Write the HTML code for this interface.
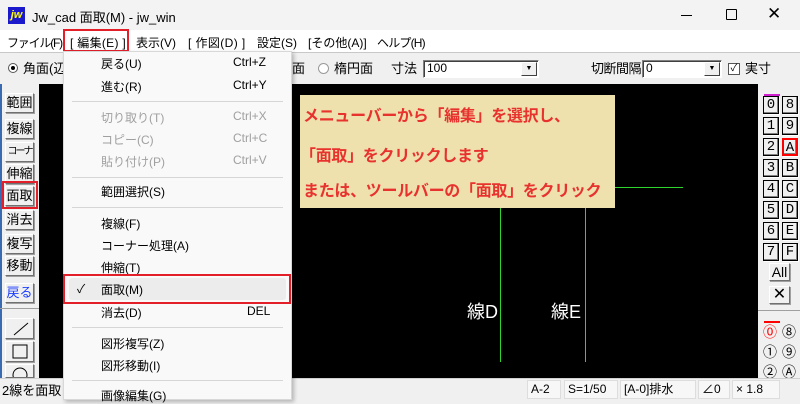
<!DOCTYPE html>
<html><head><meta charset="utf-8"><style>
*{margin:0;padding:0;box-sizing:border-box}
body{width:800px;height:400px;overflow:hidden;background:#f0f0f0;font-family:"Liberation Sans","Noto Sans CJK JP",sans-serif;font-size:12px;color:#000;position:relative}
.a{position:absolute;white-space:nowrap}
.sx{transform-origin:0 0;display:inline-block}
.btn{position:absolute;background:#f0f0f0;border:1px solid;border-color:#fff #707070 #707070 #fff;box-shadow:1px 1px 0 #a0a0a0;font-size:13px;text-align:center;line-height:18px;overflow:hidden}
.lb{position:absolute;width:20px;height:18px;background:#f0f0f0;border:1px solid #000;box-shadow:inset -1px -1px 0 #808080, 1px 1px 0 #fff;font-family:"Liberation Mono",monospace;font-size:14px;text-align:center;line-height:16px}
.mi{position:absolute;left:101px;font-size:12px}
.sc{position:absolute;left:233px;font-size:12px}
.sep{position:absolute;left:72px;width:211px;height:1px;background:#d6d6d6}
.dis{color:#a0a0a0}
.yt{position:absolute;left:303px;color:#e8322e;font-size:16px;font-weight:bold;white-space:nowrap;letter-spacing:-0.3px}
</style></head><body>
<!-- title bar -->
<div class="a" style="left:0;top:0;width:800px;height:30px;background:#f3f3f3"></div>
<div class="a" style="left:8px;top:7px;width:17px;height:17px;background:#1a1acc;color:#ff0;font-size:11px;font-weight:bold;font-style:italic;line-height:17px;text-align:center">jw</div>
<div class="a" style="left:32px;top:7px;font-size:13px">Jw_cad 面取(M) - jw_win</div>
<div class="a" style="left:681px;top:15px;width:11px;height:1px;background:#000"></div>
<div class="a" style="left:726px;top:9px;width:11px;height:11px;border:1px solid #000;border-radius:1px"></div>
<div class="a" style="left:767px;top:4px;font-size:17px;font-weight:300">✕</div>
<!-- menu bar -->
<div class="a" style="left:0;top:30px;width:800px;height:22px;background:#fff"></div>
<div class="a" style="left:7px;top:34px;letter-spacing:-1.2px">ファイル(F)</div>
<div class="a" style="left:70px;top:34px;letter-spacing:0.3px">[ 編集(E) ]</div>
<div class="a" style="left:63px;top:29px;width:66px;height:23px;border:2px solid #e3202a"></div>
<div class="a" style="left:136px;top:34px">表示(V)</div>
<div class="a" style="left:188px;top:34px;letter-spacing:0.4px">[ 作図(D) ]</div>
<div class="a" style="left:257px;top:34px">設定(S)</div>
<div class="a" style="left:308px;top:34px">[その他(A)]</div>
<div class="a" style="left:377px;top:34px;letter-spacing:-0.8px">ヘルプ(H)</div>
<!-- toolbar -->
<div class="a" style="left:0;top:52px;width:800px;height:32px;background:#f0f0f0;border-top:1px solid #c8c8c8"></div>
<div class="a" style="left:8px;top:63px;width:10px;height:10px;border-radius:50%;border:1px solid #555;background:#fff"><div style="margin:2px;width:4px;height:4px;border-radius:50%;background:#000"></div></div>
<div class="a" style="left:23px;top:58px;font-size:13px">角面(辺</div>
<div class="a" style="left:292px;top:58px;font-size:13px">面</div>
<div class="a" style="left:318px;top:63px;width:11px;height:11px;border-radius:50%;border:1px solid #999;background:#fff"></div>
<div class="a" style="left:334px;top:58px;font-size:13px">楕円面</div>
<div class="a" style="left:391px;top:58px;font-size:13px">寸法</div>
<div class="a" style="left:423px;top:60px;width:116px;height:18px;background:#fff;border:1px solid;border-color:#808080 #fff #fff #808080;box-shadow:inset 1px 1px 0 #404040;padding-left:3px;font-size:12px;line-height:15px">100</div>
<div class="a" style="left:521px;top:62px;width:16px;height:14px;background:#f0f0f0;border:1px solid;border-color:#fff #404040 #404040 #fff;font-size:7px;text-align:center;line-height:12px">▼</div>
<div class="a" style="left:591px;top:58px;font-size:13px;letter-spacing:-0.5px">切断間隔</div>
<div class="a" style="left:642px;top:60px;width:80px;height:18px;background:#fff;border:1px solid;border-color:#808080 #fff #fff #808080;box-shadow:inset 1px 1px 0 #404040;padding-left:3px;font-size:12px;line-height:15px">0</div>
<div class="a" style="left:704px;top:62px;width:16px;height:14px;background:#f0f0f0;border:1px solid;border-color:#fff #404040 #404040 #fff;font-size:7px;text-align:center;line-height:12px">▼</div>
<div class="a" style="left:728px;top:63px;width:12px;height:12px;background:#fff;border:1px solid #555;font-size:10px;line-height:10px;text-align:center">✓</div>
<div class="a" style="left:745px;top:58px;font-size:13px">実寸</div>
<!-- canvas -->
<div class="a" style="left:39px;top:84px;width:719px;height:294px;background:#000"></div>
<div class="a" style="left:615px;top:187px;width:68px;height:1px;background:#2fd42f"></div>
<div class="a" style="left:500px;top:207px;width:1px;height:155px;background:#2fd42f"></div>
<div class="a" style="left:585px;top:207px;width:1px;height:155px;background:#2fd42f"></div>
<div class="a" style="left:467px;top:298px;color:#fff;font-size:18px">線D</div>
<div class="a" style="left:551px;top:298px;color:#fff;font-size:18px">線E</div>
<!-- yellow callout -->
<div class="a" style="left:300px;top:95px;width:315px;height:113px;background:#efe1ae"></div>
<div class="yt" style="top:102px">メニューバーから「編集」を選択し、</div>
<div class="yt" style="top:142px;left:300px">「面取」をクリックします</div>
<div class="yt" style="top:177px">または、ツールバーの「面取」をクリック</div>
<!-- left toolbar -->
<div class="a" style="left:0;top:84px;width:39px;height:294px;background:#f0f0f0"></div>
<div class="a" style="left:0;top:84px;width:2px;height:294px;background:#3a6ab0"></div>
<div class="btn" style="left:5px;top:93px;width:29px;height:20px">範囲</div>
<div class="btn" style="left:5px;top:119px;width:29px;height:20px">複線</div>
<div class="btn" style="left:5px;top:142px;width:29px;height:20px;font-size:10px;letter-spacing:-2px">コーナー</div>
<div class="btn" style="left:5px;top:164px;width:29px;height:20px">伸縮</div>
<div class="btn" style="left:5px;top:186px;width:29px;height:20px">面取</div>
<div class="a" style="left:2px;top:181px;width:36px;height:28px;border:2px solid #e3202a"></div>
<div class="btn" style="left:5px;top:210px;width:29px;height:20px">消去</div>
<div class="btn" style="left:5px;top:234px;width:29px;height:20px">複写</div>
<div class="btn" style="left:5px;top:256px;width:29px;height:20px">移動</div>
<div class="btn" style="left:5px;top:283px;width:29px;height:20px;color:#1a3cff">戻る</div>
<div class="a" style="left:0;top:308px;width:39px;height:1px;background:#a0a0a0"></div>
<div class="btn" style="left:5px;top:318px;width:29px;height:21px"><svg width="29" height="21"><line x1="8" y1="16" x2="22" y2="4" stroke="#000"/></svg></div>
<div class="btn" style="left:5px;top:341px;width:29px;height:21px"><svg width="29" height="21"><rect x="7" y="3" width="14" height="13" fill="none" stroke="#000"/></svg></div>
<div class="btn" style="left:5px;top:364px;width:29px;height:14px;overflow:hidden"><svg width="29" height="21"><circle cx="14" cy="10" r="7" fill="none" stroke="#000"/></svg></div>
<!-- right panel -->
<div class="a" style="left:758px;top:84px;width:42px;height:294px;background:#f0f0f0"></div>
<div class="a" style="left:764px;top:94px;width:16px;height:2px;background:#d020d0"></div>
<div class="lb" style="left:763px;top:96px;width:16px">0</div><div class="lb" style="left:782px;top:96px;width:16px">8</div>
<div class="lb" style="left:763px;top:117px;width:16px">1</div><div class="lb" style="left:782px;top:117px;width:16px">9</div>
<div class="lb" style="left:763px;top:138px;width:16px">2</div><div class="lb" style="left:782px;top:138px;width:16px;border:2px solid #f00;color:#000">A</div>
<div class="lb" style="left:763px;top:159px;width:16px">3</div><div class="lb" style="left:782px;top:159px;width:16px">B</div>
<div class="lb" style="left:763px;top:180px;width:16px">4</div><div class="lb" style="left:782px;top:180px;width:16px">C</div>
<div class="lb" style="left:763px;top:201px;width:16px">5</div><div class="lb" style="left:782px;top:201px;width:16px">D</div>
<div class="lb" style="left:763px;top:222px;width:16px">6</div><div class="lb" style="left:782px;top:222px;width:16px">E</div>
<div class="lb" style="left:763px;top:243px;width:16px">7</div><div class="lb" style="left:782px;top:243px;width:16px">F</div>
<div class="btn" style="left:769px;top:263px;width:21px;height:18px;font-size:14px;line-height:16px">All</div>
<div class="btn" style="left:769px;top:286px;width:21px;height:18px;font-size:16px;line-height:16px">✕</div>
<div class="a" style="left:758px;top:310px;width:42px;height:1px;background:#a0a0a0"></div>
<div class="a" style="left:764px;top:321px;width:16px;height:2px;background:#f00"></div>
<div class="a" style="left:763px;top:322px;font-size:14px;color:#f00">⓪</div><div class="a" style="left:782px;top:322px;font-size:14px">⑧</div>
<div class="a" style="left:763px;top:342px;font-size:14px">①</div><div class="a" style="left:782px;top:342px;font-size:14px">⑨</div>
<div class="a" style="left:763px;top:362px;font-size:14px">②</div><div class="a" style="left:782px;top:362px;font-size:14px">Ⓐ</div>
<!-- status bar -->
<div class="a" style="left:0;top:378px;width:800px;height:22px;background:#f0f0f0;border-top:1px solid #d0d0d0"></div>
<div class="a" style="left:2px;top:380px;font-size:13px">2線を面取り</div>
<div class="a" style="left:527px;top:380px;width:34px;height:19px;background:#f7f7f7;border:1px solid #ddd;padding-left:3px;line-height:17px">A-2</div>
<div class="a" style="left:564px;top:380px;width:54px;height:19px;background:#f7f7f7;border:1px solid #ddd;padding-left:3px;line-height:17px">S=1/50</div>
<div class="a" style="left:620px;top:380px;width:76px;height:19px;background:#f7f7f7;border:1px solid #ddd;padding-left:3px;line-height:17px">[A-0]排水</div>
<div class="a" style="left:698px;top:380px;width:32px;height:19px;background:#f7f7f7;border:1px solid #ddd;padding-left:3px;line-height:17px">∠0</div>
<div class="a" style="left:732px;top:380px;width:48px;height:19px;background:#f7f7f7;border:1px solid #ddd;padding-left:3px;line-height:17px">× 1.8</div>
<!-- dropdown menu -->
<div class="a" style="left:63px;top:51px;width:229px;height:349px;background:#f9f9f9;border:1px solid #d8d8d8;box-shadow:2px 2px 4px rgba(0,0,0,.25)"></div>
<div class="mi" style="top:55px">戻る(U)</div><div class="sc" style="top:55px">Ctrl+Z</div>
<div class="mi" style="top:78px">進む(R)</div><div class="sc" style="top:78px">Ctrl+Y</div>
<div class="sep" style="top:101px"></div>
<div class="mi dis" style="top:109px">切り取り(T)</div><div class="sc dis" style="top:109px">Ctrl+X</div>
<div class="mi dis" style="top:131px">コピー(C)</div><div class="sc dis" style="top:131px">Ctrl+C</div>
<div class="mi dis" style="top:153px">貼り付け(P)</div><div class="sc dis" style="top:153px">Ctrl+V</div>
<div class="sep" style="top:177px"></div>
<div class="mi" style="top:183px">範囲選択(S)</div>
<div class="sep" style="top:207px"></div>
<div class="mi" style="top:215px">複線(F)</div>
<div class="mi" style="top:237px">コーナー処理(A)</div>
<div class="mi" style="top:259px">伸縮(T)</div>
<div class="a" style="left:69px;top:278px;width:217px;height:22px;background:#ececec;border-radius:3px"></div>
<div class="a" style="left:77px;top:280px;font-size:12px">✓</div>
<div class="mi" style="top:281px">面取(M)</div>
<div class="a" style="left:63px;top:274px;width:228px;height:30px;border:2px solid #e3202a"></div>
<div class="mi" style="top:304px">消去(D)</div><div class="sc" style="top:304px;left:247px">DEL</div>
<div class="sep" style="top:327px"></div>
<div class="mi" style="top:335px">図形複写(Z)</div>
<div class="mi" style="top:357px">図形移動(I)</div>
<div class="sep" style="top:380px"></div>
<div class="mi" style="top:387px">画像編集(G)</div>
</body></html>
